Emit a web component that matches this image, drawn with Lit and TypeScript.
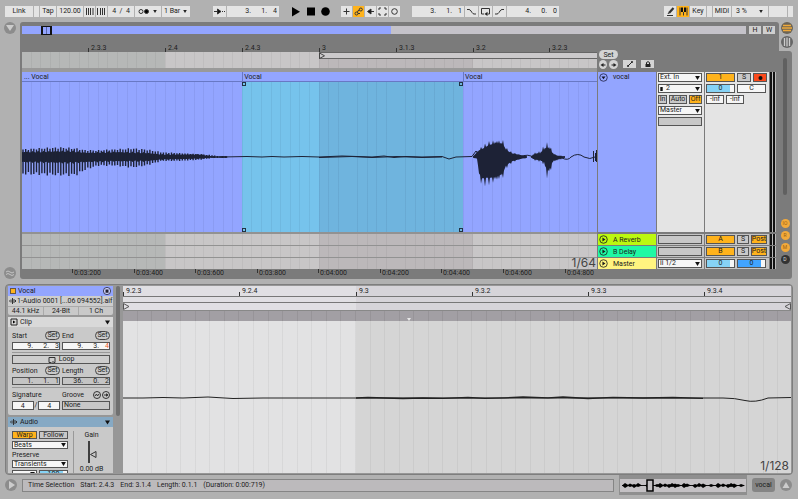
import { LitElement, html, svg, css } from "lit";
import { customElement } from "lit/decorators.js";

type Key = [x: number, up: number, down: number];

const TIMELINE_W = 575;
const MID = 75;

/** Linear interpolation between envelope keys. */
const envelope = (keys: Key[], x: number): [number, number] => {
  for (let i = 1; i < keys.length; i++) {
    const [x1, u1, d1] = keys[i];
    if (x <= x1) {
      const [x0, u0, d0] = keys[i - 1];
      const t = (x - x0) / (x1 - x0);
      return [u0 + (u1 - u0) * t, d0 + (d1 - d0) * t];
    }
  }
  return [0, 0];
};

/** Filled outline whose peaks reach the envelope and whose valleys fall back toward the middle. */
const burst = (keys: Key[], mid: number, step: number, core: number): string => {
  const top: string[] = [];
  const bottom: string[] = [];
  const end = keys[keys.length - 1][0];
  let n = 0;
  for (let x = keys[0][0]; x <= end; x += step, n++) {
    const [u, d] = envelope(keys, x);
    const wob = 0.85 + 0.15 * Math.sin(n * 1.7);
    const k = n % 2 ? core : wob;
    top.push(`${x.toFixed(1)} ${(mid - Math.max(u * k, 0.5)).toFixed(1)}`);
    bottom.unshift(`${x.toFixed(1)} ${(mid + Math.max(d * k, 0.5)).toFixed(1)}`);
  }
  return `M${top.join("L")}L${bottom.join("L")}Z`;
};

/** One vertical stroke for each period of the tone. */
const spikes = (keys: Key[], mid: number, period: number): string => {
  let d = "";
  let n = 0;
  for (let x = keys[0][0] + 1; x <= keys[keys.length - 1][0]; x += period, n++) {
    const [u, l] = envelope(keys, x);
    const k = 0.92 + 0.08 * Math.sin(n * 2.3);
    d += `M${x.toFixed(1)} ${(mid - u * k).toFixed(1)}V${(mid + l * k).toFixed(1)}`;
  }
  return d;
};

const DECAY: Key[] = [
  [0, 8, 18], [15, 9, 18], [38, 10, 19], [54, 9, 19], [64, 7, 13], [76, 7, 9],
  [92, 8, 9], [110, 9, 11], [124, 8, 9], [140, 5, 4], [160, 4, 4], [178, 3, 3],
  [190, 2, 1], [196, 1, 1], [206, 1, 1],
];
const DECAY_CORE: Key[] = [
  [0, 6, 6], [50, 7, 7], [64, 5, 6], [92, 6, 5], [124, 5, 5], [140, 3, 3], [178, 3, 2], [190, 1, 1], [206, 1, 1],
];
const WORD_A: Key[] = [
  [451, 1, 1], [455, 6, 2], [457, 9, 22], [460, 11, 30], [466, 16, 29], [474, 19, 27],
  [481, 18, 22], [484, 10, 12], [490, 5, 6], [497, 3, 3], [505, 1, 1],
];
const WORD_B: Key[] = [
  [509, 1, 1], [513, 5, 4], [518, 6, 5], [522, 12, 8], [525, 15, 22], [528, 13, 18],
  [531, 5, 6], [535, 2, 4], [543, 1, 1],
];

const BEATS: [string, number][] = [
  ["2.3.3", 66], ["2.4", 143], ["2.4.3", 220], ["3", 297], ["3.1.3", 374], ["3.2", 451], ["3.2.3", 527],
];
const TIMES: [string, number][] = [
  ["0:03:200", 50], ["0:03:400", 112], ["0:03:600", 173], ["0:03:800", 235],
  ["0:04:000", 296], ["0:04:200", 358], ["0:04:400", 419], ["0:04:600", 481], ["0:04:800", 543],
];
const EDITOR_W = 668;
const EDITOR_BEATS: [string, number][] = [
  ["9.2.3", 0], ["9.2.4", 116], ["9.3", 233], ["9.3.2", 349], ["9.3.3", 465], ["9.3.4", 581],
];

const pct = (v: number, total: number) => `left:${((v / total) * 100).toFixed(2)}%`;

const marks = (items: [string, number][], total: number) =>
  items.map(([t, x]) => html`<span class="mark" style=${pct(x, total)}>${t}</span>`);

const arrow = html`<svg class="arrow" viewBox="0 0 6 5"><path d="M0 0H6L3 5Z" /></svg>`;

const choice = (label: string, value: string, cls = "", lead: unknown = "") => html`
  <label class="box choice ${cls}">${lead}<select aria-label=${label}><option>${value}</option></select>${arrow}</label>`;

const position = (label: string, parts: string[], cls = "") => html`
  <div class="position ${cls}" role="group" aria-label=${label}>
    ${parts.map((p, i) => html`<input aria-label="${label} ${i + 1}" .value=${i < 2 ? p + "." : p} />`)}
  </div>`;

const playDot = html`<svg class="dot" viewBox="0 0 10 10">
  <circle cx="5" cy="5" r="4.2" fill="none" stroke="currentColor" stroke-width=".9" />
  <path d="M3.8 2.8V7.2L7.2 5Z" fill="currentColor" /></svg>`;

const meter = html`<div class="meter"><i></i><i></i></div>`;

@customElement("app-root")
export class AppRoot extends LitElement {
  static styles = css`
    :host {
      display: flex; flex-direction: column; height: 100vh; min-height: 440px; box-sizing: border-box;
      background: #b1b1b1; color: #1c1c1c; overflow: hidden;
      font: 7px/8px Roboto, "Liberation Sans", sans-serif;
    }
    * { box-sizing: border-box; }
    button, input, select { font: inherit; color: inherit; margin: 0; padding: 0; border: 0; border-radius: 0; background: none; min-width: 0; appearance: none; }
    svg { display: block; flex: none; }

    /* control bar */
    .bar { display: flex; align-items: center; height: 22px; padding: 0 5px; flex: none; }
    .group { display: flex; gap: 1px; margin-right: 12px; }
    .group.wide { margin-right: 23px; }
    .group.end { margin: 0 0 0 auto; }
    .group > * { height: 11px; background: #e4e4e4; display: flex; align-items: center; justify-content: center; flex: none; }
    .group svg { width: 11px; height: 11px; fill: none; stroke: #333; stroke-width: 1; }
    .group > .on { background: #ffb31c; }
    .w5 { width: 5px; } .w11 { width: 11px; } .w12 { width: 12px; } .w13 { width: 13px; } .w16 { width: 16px; }
    .w18 { width: 18px; } .w26 { width: 26px; } .w28 { width: 28px; } .w36 { width: 36px; }
    .group .w51 { width: 52px; justify-content: flex-end; padding-right: 2px; }
    .group input.w26 { text-align: center; }
    .group label { gap: 2px; }
    .group label.w36 { gap: 12px; }
    .group .arrow { width: 4px; height: 3px; stroke: none; fill: #222; }
    .group.plain { gap: 4px; margin-right: 9px; }
    .group.plain > * { background: none; }
    .group.plain svg { fill: #000; stroke: none; }
    .position { display: flex; justify-content: flex-end; align-items: center; }
    .position input { width: 16px; text-align: right; }
    .position input:last-child { width: 10px; }

    /* arrangement */
    .upper { display: flex; flex: none; }
    .gutter { width: 20px; display: flex; flex-direction: column; justify-content: space-between; align-items: center; }
    .round { width: 12px; height: 12px; border-radius: 50%; background: #8c8c8c; display: flex; align-items: center; justify-content: center; flex: none; }
    .round svg { width: 8px; height: 8px; fill: #ccc; }
    .frame { flex: 1; min-width: 0; background: #7b7b7b; border-radius: 3px 3px 0 3px; padding: 4px 0 0 2px; }
    .overview { display: flex; gap: 2px; padding-right: 4px; height: 8px; }
    .map { flex: 1; position: relative; margin-right: 1px; background: linear-gradient(90deg, #93a5ff 51%, #c4c2c9 51%); }
    .view { position: absolute; left: 2.6%; width: 11px; top: 0; bottom: -1px; border: solid #111; border-width: 1px 2px; background: linear-gradient(90deg, transparent 3px, #5a66a8 3px 4px, transparent 4px); }
    .overview button { width: 12px; background: #cfcfcf; line-height: 8px; }
    .body { display: flex; gap: 1px; }
    .timeline { flex: 1; min-width: 0; }
    .ruler { height: 18px; position: relative; }
    .mark { position: absolute; bottom: 0; height: 7px; padding-left: 3px; line-height: 6px; white-space: nowrap; }
    .mark::before { content: ""; position: absolute; left: 0; bottom: 0; height: 4px; width: 1px; background: #333; }
    .beats {
      background:
        repeating-linear-gradient(90deg, transparent 0 1.5%, #0000000c 1.5% 1.67%),
        linear-gradient(90deg, #b6b8b7 24.9%, #c8c6c7 24.9% 51.7%, #bcb8ba 51.7% 78.4%, #c8c6c7 78.4%);
    }
    .scrub { height: 16px; display: flex; justify-content: flex-end; }
    .loop { width: 48.3%; height: 7px; border: solid #666; border-width: 1px 0; background: #cbc9cb; }
    .loop svg { width: 6px; height: 6px; fill: none; stroke: #444; }
    .strip { height: 4px; background: #999; }
    .clips { display: flex; height: 160px; flex-direction: column; position: relative; background: #93a5ff; }
    .names { display: flex; height: 10px; border-bottom: 1px solid #6878c4; }
    .names span { padding: 1px 0 0 1px; border-left: 1px solid #6878c4; }
    .names span:nth-child(1) { width: 38.3%; border: 0; padding-left: 2px; }
    .names span:nth-child(2) { width: 38.4%; }
    .selection { position: absolute; left: 38.3%; width: 38.4%; top: 10px; bottom: 0; background: linear-gradient(90deg, #76c3ec 34.8%, #6fb4de 34.8%); display: grid; grid-template-columns: 4px 4px; justify-content: space-between; align-content: space-between; }
    .selection i { height: 4px; border: 1px solid #234; }
    .wave { position: relative; flex: 1; min-height: 0; background: repeating-linear-gradient(90deg, transparent 0 1.5%, #0000220f 1.5% 1.67%); }
    .wave svg { width: 100%; height: 150px; fill: #1d2236; stroke: none; }
    .wave .thin { fill: none; stroke: #1d2236; stroke-width: 1; }
    .wave .spikes { fill: none; stroke: #1d2236; stroke-width: 1.4; }
    .lane { height: 11px; margin-top: 1px; }
    .lanes { background: #929292; padding-top: 1px; position: relative; }
    .zoom { position: absolute; right: 1px; bottom: 0; font: 12px/12px Inter, "Liberation Sans", sans-serif; color: #444; }
    .clock { height: 10px; position: relative; }
    .clock .mark { top: 0; height: 8px; padding-left: 2px; line-height: 9px; }
    .clock .mark::before { top: 0; }

    .tracks { width: 181px; flex: none; }
    .locators { height: 38px; padding: 16px 0 0 1px; display: grid; grid-template-columns: 8px 9px 16px 16px; column-gap: 2px; row-gap: 1px; align-content: start; }
    .locators button { height: 9px; background: #d4d4d4; display: flex; align-items: center; justify-content: center; }
    .locators svg { width: 8px; height: 8px; fill: #222; }
    .locators .set { grid-column: 1 / 3; border-radius: 5px; }
    .locators .nav { border-radius: 50%; grid-row: 2; }
    .locators .tool { height: 8px; grid-row: 2; margin-left: 3px; }
    .row { display: grid; grid-template-columns: 58px 47px 64px 6px; gap: 1px; height: 11px; margin-top: 1px; }
    .row.tall { height: 160px; margin: 0 0 2px; }
    .row > * { background: #c4c4c4; min-width: 0; }
    .row.tall > * { background: #e4e4e4; }
    .name { display: flex; align-items: center; gap: 5px; padding-left: 1px; }
    .row.tall .name { background: #93a5ff; align-items: flex-start; padding-top: 1px; line-height: 9px; }
    .row .reverb { background: #bcf810; }
    .row .delay { background: #1ff9a4; }
    .row .main { background: #fff480; }
    .dot { width: 9px; height: 9px; }
    .io, .mix { display: flex; flex-direction: column; gap: 2px; padding: 1px 2px 1px 1px; }
    .line { display: flex; gap: 2px; }
    .box { height: 9px; border: 1px solid #555; background: #f6f6f6; display: flex; align-items: center; justify-content: center; line-height: 7px; white-space: nowrap; }
    .choice select { flex: 1; height: 7px; line-height: 7px; padding-left: 1px; }
    .arrow { width: 5px; height: 4px; fill: #111; margin-right: 1px; }
    .box.grey { background: #c8c8c8; }
    .box.amber { background: #ffb31c; }
    .box.red { background: #fb4a1c; }
    .box.red .arrow { margin: 0; }
    .box.fill { background: linear-gradient(90deg, #86d3f6 84%, #f6f6f6 84%); }
    .box.deep { background: linear-gradient(90deg, #41a4ff 84%, #f6f6f6 84%); }
    .f1 { flex: 1; }
    .half { width: 29px; }
    .s12 { width: 12px; } .s14 { width: 14px; } .s16 { width: 16px; } .s18 { width: 18px; }
    .line.spread button { flex: 1 1 auto; }
    .row .meter { display: flex; gap: 1px; background: #bbb; }
    .meter i { width: 2px; background: #111; }

    .side { width: 19px; display: flex; flex-direction: column; }
    .switches { height: 29px; display: flex; flex-direction: column; gap: 2px; padding-left: 2px; }
    .switches svg { width: 12px; height: 12px; }
    .well { flex: 1; width: 13px; background: #7b7b7b; border-radius: 0 3px 3px 0; display: flex; flex-direction: column; align-items: center; gap: 3px; padding: 7px 1px 15px 0; }
    .thumb { width: 4px; flex: 1; background: #606060; border-radius: 2px; margin-bottom: 21px; }
    .pill { width: 9px; height: 9px; border-radius: 50%; background: #f2a93a; color: #9a6210; font-size: 5px; line-height: 9px; text-align: center; }
    .pill.dark { background: #333; color: #ddd; }

    /* clip detail */
    .detail { flex: 1; min-height: 0; margin: 5px 5px 0; padding: 1px; border: 1px solid #7e7e7e; border-radius: 4px; background: #979797; display: flex; gap: 3px; overflow: hidden; }
    .inspector { width: 106px; flex: none; display: flex; flex-direction: column; gap: 2px; padding-left: 1px; overflow: hidden; }
    .card { flex: none; background: #c9c9c9; border-radius: 2px; }
    .head { display: flex; align-items: center; gap: 2px; height: 10px; padding: 0 2px; background: #d9d9d9; white-space: nowrap; }
    .head.clip { background: #93a5ff; }
    .head.file { background: #cdcdcd; gap: 0; padding: 0 0 0 1px; }
    .head.audio { background: #86a9c4; }
    .head svg { width: 8px; height: 8px; }
    .head .arrow { width: 5px; height: 5px; }
    .chip { width: 6px; height: 6px; background: #ffb31c; border: 1px solid #654; }
    .facts { display: grid; grid-template-columns: 1fr 1fr 1fr; border-top: 1px solid #aaa; text-align: center; line-height: 8px; }
    .facts span + span { border-left: 1px solid #aaa; }
    .fields { padding: 4px 4px 5px; display: grid; grid-template-columns: 48px 48px; column-gap: 2px; row-gap: 2px; }
    .cap { display: flex; align-items: center; justify-content: space-between; height: 9px; }
    .pillset { border: 1px solid #444; border-radius: 5px; height: 9px; line-height: 7px; width: 15px; }
    .fields .position { border: 1px solid #555; background: #f6f6f6; height: 8px; line-height: 6px; }
    .fields .position.flat { background: #c4c4c4; }
    .fields .position input { height: 6px; line-height: 6px; }
    .position.hot input:last-child { color: #f05a28; }
    .full { grid-column: 1 / 3; }
    hr { grid-column: 1 / 3; margin: 0; border: 0; border-top: 1px solid #999; }
    .box.loopbtn { background: #cdcdcd; gap: 3px; }
    .icon { width: 8px; height: 8px; fill: none; stroke: #333; }
    .sig input { width: 100%; text-align: center; height: 7px; }
    .sig .box { flex: 1; min-width: 0; }
    .pair { display: flex; gap: 1px; }
    .warp { display: grid; grid-template-columns: 56px 1fr; padding: 4px 4px 0; }
    .warp > div { display: flex; flex-direction: column; gap: 2px; }
    .warp .box { height: 8px; line-height: 6px; }
    .warp select { height: 6px; line-height: 6px; }
    .warp .gain { border-left: 1px solid #999; margin-left: 5px; align-items: center; text-align: center; gap: 1px; }
    .gain svg { width: 16px; height: 24px; }
    .warp .cap { height: 7px; }
    .scroll { width: 4px; height: 130px; border-radius: 2px; background: #707070; flex: none; }
    .editor { flex: 1; min-width: 0; display: flex; flex-direction: column; position: relative; }
    .tone { background: linear-gradient(90deg, #e0dfe3 34.9%, #d6d4d9 34.9%); }
    .editor .ruler { height: 11px; border-bottom: 1px solid #777; }
    .editor .mark { height: 8px; line-height: 7px; }
    .editor .zoom { bottom: 1px; right: 2px; }
    .thinrow { height: 6px; border-bottom: 1px solid #777; }
    .looprow { height: 8px; border-bottom: 1px solid #888; display: flex; justify-content: space-between; }
    .looprow svg { width: 7px; height: 7px; fill: none; stroke: #555; }
    .shade { height: 10px; background: repeating-linear-gradient(90deg, transparent 0 2.03%, #00000012 2.03% 2.18%), #a29fa4; display: flex; justify-content: center; align-items: flex-end; padding-right: 96px; }
    .shade svg { width: 4px; height: 3px; fill: #e8e8e8; }
    .canvas { flex: 1; min-height: 0; background: repeating-linear-gradient(90deg, transparent 0 2.03%, #0000000c 2.03% 2.18%), linear-gradient(90deg, #e2e2e3 34.9%, #d5d5d5 34.9%); }
    .canvas svg { width: 100%; height: 150px; fill: none; stroke: #222; stroke-width: 1; }

    /* status line */
    .status { display: flex; flex: none; height: 24px; padding: 0 6px 4px 5px; align-items: center; }
    .text { flex: 1; height: 13px; margin: 0 5px 0 5px; border: 1px solid #858585; background: #bcbabc; padding: 0 5px; line-height: 11px; display: flex; gap: 6px; overflow: hidden; white-space: nowrap; }
    .notch { background: #8f8f8f; align-self: flex-start; padding: 4px 1px 3px; height: 20px; }
    .mini { width: 126px; height: 13px; background: #c4c1c4; }
    .tab { width: 23px; height: 14px; margin: 0 5px; border-radius: 3px; background: #858585; }
  `;

  render() {
    return html`
      ${this.controlBar()}
      <main class="upper">
        <div class="gutter">
          <span class="round"><svg viewBox="0 0 8 8"><path d="M0 1H8L4 7Z" /></svg></span>
          <span class="round"><svg viewBox="0 0 8 8"><path d="M0 3Q2 1 4 3T8 3M0 5.5Q2 3.5 4 5.5T8 5.5" fill="none" stroke="#c4c4c4" /></svg></span>
        </div>
        <div class="frame">
          <div class="overview"><div class="map"><div class="view"></div></div><button>H</button><button>W</button></div>
          <div class="body">${this.timeline()}${this.tracks()}</div>
        </div>
        <aside class="side">
          <div class="switches">
            <svg viewBox="0 0 12 12"><circle cx="6" cy="6" r="6" fill="#6b6456" /><path d="M2 3.5H10M1 6H11M2 8.5H10" stroke="#f0a93a" stroke-width="1.5" /></svg>
            <svg viewBox="0 0 12 12"><circle cx="6" cy="6" r="6" fill="#666" /><path d="M3.5 2V10M6 1.5V10.5M8.5 2V10" stroke="#ccc" stroke-width="1.3" /></svg>
          </div>
          <div class="well">
            <div class="thumb"></div>
            <button class="pill">IO</button><button class="pill">R</button><button class="pill">M</button><button class="pill dark">D</button>
          </div>
        </aside>
      </main>
      ${this.detail()} ${this.status()}
    `;
  }

  private controlBar() {
    return html`<header class="bar">
      <div class="group wide">
        <button class="w28">Link</button><span class="w5"></span><button class="w16">Tap</button>
        <input class="w26" aria-label="Tempo" value="120.00" />
        <button class="w11" aria-label="Nudge down"><svg viewBox="0 0 11 11"><path d="M2.5 2V9M4.5 2V9M6.5 2V9M9 2V9" /></svg></button>
        <button class="w11" aria-label="Nudge up"><svg viewBox="0 0 11 11"><path d="M1.5 2V9M4.5 2V9M6.5 2V9M8.5 2V9" /></svg></button>
        <input class="w26" aria-label="Time signature" value="4  /  4" />
        <button class="w26" aria-label="Metronome"><svg viewBox="0 0 11 11"><circle cx="3" cy="5.5" r="2" /><circle cx="8.5" cy="5.5" r="2" fill="#000" /></svg>&nbsp;&nbsp;<svg class="arrow" viewBox="0 0 6 5"><path d="M0 0H6L3 5Z" /></svg></button>
        <label class="w28"><select aria-label="Quantization"><option>1 Bar</option></select>${arrow}</label>
      </div>
      <div class="group">
        <button class="w13" aria-label="Follow"><svg viewBox="0 0 11 11"><path d="M0 5.5H4M8 5.5H9M10 5.5H11" /><path d="M3.5 3V8L7 5.5Z" fill="#111" /></svg></button>
        ${position("Arrangement position", ["3", "1", "4"], "w51")}
      </div>
      <div class="group plain">
        <button aria-label="Play"><svg viewBox="0 0 11 11"><path d="M1 1V10.5L9 5.7Z" /></svg></button>
        <button aria-label="Stop"><svg viewBox="0 0 11 11"><path d="M1 1.500H9V9.500H1Z" /></svg></button>
        <button aria-label="Record"><svg viewBox="0 0 11 11"><circle cx="4.5" cy="5.5" r="4.3" /></svg></button>
      </div>
      <div class="group">
        <button class="w11" aria-label="Overdub"><svg viewBox="0 0 11 11"><path d="M5.5 2.5V8.5M2.5 5.5H8.5" /></svg></button>
        <button class="w11 on" aria-label="Automation arm"><svg viewBox="0 0 11 11"><circle cx="3.5" cy="7.5" r="1.5" /><circle cx="7.8" cy="3.5" r="1.5" /><path d="M4.5 6.5Q4.5 4 6.5 4M5 7.5H7" /></svg></button>
        <button class="w11" aria-label="Re-enable automation"><svg viewBox="0 0 11 11"><path d="M5 5.5H9" /><path d="M6 3V8L2.5 5.5Z" fill="#111" /></svg></button>
        <button class="w11" aria-label="Capture"><svg viewBox="0 0 11 11"><path d="M2 4V2H4M7 2H9V4M9 7V9H7M4 9H2V7" /></svg></button>
        <button class="w11" aria-label="Session record"><svg viewBox="0 0 11 11"><circle cx="5.5" cy="5.5" r="2.8" /></svg></button>
      </div>
      <div class="group">
        ${position("Loop start", ["3", "1", "1"], "w51")}
        <button class="w13" aria-label="Punch in"><svg viewBox="0 0 11 11"><path d="M1 3.5H3Q4 3.5 5 5L6 6.5Q7 8 8 8H10" /></svg></button>
        <button class="w13" aria-label="Loop"><svg viewBox="0 0 11 11"><path d="M4 8H1.5V2.5H9.5V8H7.5" /><path d="M7.5 5.8V10L4.5 8Z" fill="#222" stroke="none" /></svg></button>
        <button class="w13" aria-label="Punch out"><svg viewBox="0 0 11 11"><path d="M1 8H3Q4 8 5 6.5L6 5Q7 3.5 8 3.5H10" /></svg></button>
        ${position("Loop length", ["4", "0", "0"], "w51")}
      </div>
      <div class="group end">
        <button class="w12" aria-label="Draw mode"><svg viewBox="0 0 11 11"><path d="M4 7L8.5 2" stroke-width="2.2" /><path d="M2 9.5H8M3 8L4 6.5" /></svg></button>
        <button class="w12 on" aria-label="Computer MIDI keyboard"><svg viewBox="0 0 11 11"><path d="M2 1.5V9.5M5.5 6V9.5M9 1.5V9.5" /><path d="M4 1.5V6M7 1.5V6" stroke-width="2" stroke="#111" /></svg></button>
        <button class="w16">Key</button><span class="w5"></span><button class="w18">MIDI</button>
        <label class="w36"><select aria-label="CPU"><option>3 %</option></select>${arrow}</label>
        <span class="w18"></span><span class="w5"></span>
      </div>
    </header>`;
  }

  private timeline() {
    return html`<section class="timeline">
      <div class="ruler">${marks(BEATS, TIMELINE_W)}</div>
      <div class="scrub beats"><div class="loop"><svg viewBox="0 0 6 6"><path d="M.5 0V5.5L5.5 2.8Z" /></svg></div></div>
      <div class="strip"></div>
      <div class="clips">
        <div class="names"><span>... Vocal</span><span>Vocal</span><span>Vocal</span></div>
        <div class="selection"><i></i><i></i><i></i><i></i></div>
        <div class="wave">
          <svg viewBox="0 0 ${TIMELINE_W} 150" preserveAspectRatio="none">
            ${svg`
              <path d=${burst(DECAY_CORE, MID, 1.35, 0.8)} />
              <path class="spikes" d=${spikes(DECAY, MID, 2.7)} />
              <path d=${burst(WORD_A, MID, 1, 0.72)} />
              <path d=${burst(WORD_B, MID, 1, 0.6)} />
              <path class="thin" d="M200 75L225 74.5L240 75L250 74.5L262 75L280 74.5L297 75L320 74L350 75L362 74L372 75.5L384 74.5L400 75L420 74.5L427 77L434 75L450 74.5L454 69L458 74M497 75Q507 71 512 76M540 76Q546 79 549 75Q556 70 562 75Q568 78 573 75" />
              <path class="thin" d="M297 75.5L330 74.5L350 75.5L375 74.5L400 75.5L420 75M571.5 69V80M573.5 71V79M574.5 68V80" />`}
          </svg>
        </div>
      </div>
      <div class="lanes">
        <div class="lane beats"></div><div class="lane beats"></div><div class="lane beats"></div>
        <div class="zoom">1/64</div>
      </div>
      <div class="clock">${marks(TIMES, TIMELINE_W)}</div>
    </section>`;
  }

  private tracks() {
    const bus = (name: string, cls: string, key: string) => html`
      <div class="row">
        <div class="name ${cls}">${playDot}${name}</div>
        <div class="io"><span class="box grey"></span></div>
        <div class="mix"><div class="line"><button class="box amber half">${key}</button><button class="box grey s12">S</button><button class="box amber s16">Post</button></div></div>
        ${meter}
      </div>`;
    return html`<section class="tracks">
      <div class="locators">
        <button class="set">Set</button>
        <button class="nav" aria-label="Previous locator"><svg viewBox="0 0 8 8"><path d="M1.5 4L4.5 2V6ZM4 3.5H6.5V4.5H4Z" /></svg></button>
        <button class="nav" aria-label="Next locator"><svg viewBox="0 0 8 8"><path d="M6.5 4L3.5 2V6ZM4 3.5H1.5V4.5H4Z" /></svg></button>
        <button class="tool" aria-label="Automation mode"><svg viewBox="0 0 8 8"><path d="M2 6L6 2" stroke="#222" /><circle cx="2" cy="6" r="1" /><circle cx="6" cy="2" r="1" /></svg></button>
        <button class="tool" aria-label="Lock envelopes"><svg viewBox="0 0 8 8"><path d="M1.5 4H6.5V7H1.5Z" /><path d="M2.5 4V2.5Q4 .8 5.5 2.5V4" fill="none" stroke="#222" /></svg></button>
      </div>
      <div class="row tall">
        <div class="name"><svg class="dot" viewBox="0 0 10 10"><circle cx="5" cy="5" r="4.2" fill="none" stroke="#224" stroke-width=".9" /><path d="M2.8 3.8H7.2L5 7Z" fill="#112" /></svg>vocal</div>
        <div class="io">
          ${choice("Audio from", "Ext. In")}
          ${choice("Input channel", "2", "", html`<svg class="arrow" viewBox="0 0 5 5"><path d="M1 0H4V5H1Z" /></svg>`)}
          <div class="line spread"><button class="box grey">In</button><button class="box grey">Auto</button><button class="box amber">Off</button></div>
          ${choice("Audio to", "Master")}
          <span class="box grey"></span>
        </div>
        <div class="mix">
          <div class="line"><button class="box amber half">1</button><button class="box grey s14">S</button><button class="box red s14" aria-label="Arm"><svg class="arrow" viewBox="0 0 5 5"><circle cx="2.5" cy="2.5" r="2.5" /></svg></button></div>
          <div class="line"><button class="box fill half">0</button><button class="box half">C</button></div>
          <div class="line"><button class="box s18">-inf</button><button class="box s18">-inf</button></div>
        </div>
        ${meter}
      </div>
      ${bus("A Reverb", "reverb", "A")} ${bus("B Delay", "delay", "B")}
      <div class="row">
        <div class="name main">${playDot}Master</div>
        <div class="io">${choice("Main output", "ii 1/2")}</div>
        <div class="mix"><div class="line"><button class="box fill half">0</button><button class="box fill deep half">0</button></div></div>
        ${meter}
      </div>
    </section>`;
  }

  private detail() {
    const cap = (t: string) => html`<div class="cap">${t}<button class="pillset">Set</button></div>`;
    const waveIcon = html`<svg viewBox="0 0 8 8"><path d="M.5 3.5V4.5M2 2.5V5.5M3.5 1V7M5 2V6M6.5 3V5" stroke="#333" /></svg>`;
    return html`<section class="detail">
      <div class="inspector">
        <div class="card">
          <div class="head clip"><span class="chip"></span><span class="f1">Vocal</span><svg viewBox="0 0 8 8"><circle cx="4" cy="4" r="3.6" fill="#d0d4ff" stroke="#223" stroke-width=".8" /><path d="M2.5 2.5H5.5V5.8H2.5Z" fill="#223" /></svg></div>
          <div class="head file">${waveIcon}<span class="f1">1-Audio 0001 [...06 094552].aif</span></div>
          <div class="facts"><span>44.1 kHz</span><span>24-Bit</span><span>1 Ch</span></div>
        </div>
        <div class="card">
          <div class="head"><svg viewBox="0 0 8 8"><path d="M1 1H7V7H1Z" fill="none" stroke="#222" /><path d="M3 2.5V5.5L5.5 4Z" /></svg><span class="f1">Clip</span>${arrow}</div>
          <div class="fields">
            ${cap("Start")}${cap("End")}
            ${position("Start", ["9", "2", "3"])}${position("End", ["9", "3", "4"], "hot")}
            <hr />
            <button class="box full loopbtn"><svg class="icon" viewBox="0 0 8 8"><path d="M3 6.5H1V1.5H7V6.5H5.5M5.5 5L4 6.5L5.5 8" /></svg>Loop</button>
            ${cap("Position")}${cap("Length")}
            ${position("Position", ["1", "1", "1"], "flat")}${position("Length", ["36", "0", "2"], "flat")}
            <hr />
            <div class="cap">Signature</div>
            <div class="cap">Groove<span class="pair"><svg class="icon" viewBox="0 0 8 8"><circle cx="4" cy="4" r="3.5" /><path d="M2 5L3.5 3L4.5 5L6 3" /></svg><svg class="icon" viewBox="0 0 8 8"><circle cx="4" cy="4" r="3.5" /><path d="M2 4H5M4.5 2.8L6 4L4.5 5.2Z" /></svg></span></div>
            <div class="pair sig"><span class="box"><input aria-label="Numerator" value="4" /></span>/<span class="box"><input aria-label="Denominator" value="4" /></span></div>
            <label class="box grey choice"><select aria-label="Groove"><option>None</option></select></label>
          </div>
        </div>
        <div class="card">
          <div class="head audio">${waveIcon}<span class="f1">Audio</span>${arrow}</div>
          <div class="warp">
            <div>
              <div class="line"><button class="box amber f1">Warp</button><button class="box grey half">Follow</button></div>
              ${choice("Warp mode", "Beats")}
              <div class="cap">Preserve</div>
              ${choice("Preserve", "Transients")}
              <div class="line">${choice("Loop mode", "→", "f1")}<button class="box fill half">100</button></div>
            </div>
            <div class="gain">Gain
              <svg viewBox="0 0 16 24"><path d="M5 1V23" stroke="#111" stroke-width="1.5" /><path d="M6.5 14.5L12 11.5V17.5Z" fill="none" stroke="#333" /></svg>
              <span>0.00 dB</span></div>
          </div>
        </div>
      </div>
      <div class="scroll"></div>
      <div class="editor">
        <div class="ruler tone">${marks(EDITOR_BEATS, EDITOR_W)}</div>
        <div class="thinrow tone"></div>
        <div class="looprow tone"><svg viewBox="0 0 7 7"><path d="M.5 .5V6.5L6 3.5Z" /></svg><svg viewBox="0 0 7 7"><path d="M6.5 .5V6.5L1 3.5Z" /></svg></div>
        <div class="shade"><svg viewBox="0 0 4 3"><path d="M0 0H4L2 3Z" /></svg></div>
        <div class="canvas"><svg viewBox="0 0 668 150" preserveAspectRatio="none">
          <path d="M0 77H20L40 76.5L60 77L85 76L110 77.5L140 77H233H560L600 77Q612 77 622 79.5T645 77L668 76.5" />
          <path stroke-width="1.3" d="M233 77L245 76.5L262 77L280 77.5L300 77L320 77.3L345 76.5L362 77.3L382 76.8L400 76L425 76.8L440 76L465 77.5L490 76.3L520 77L550 76.5L580 77.3" />
        </svg></div>
        <div class="zoom">1/128</div>
      </div>
    </section>`;
  }

  private status() {
    const blobs = [10, 20, 28, 36, 56, 74, 80, 90, 98, 104, 110, 116, 128, 134, 150, 158, 166, 182, 196, 206, 216, 222, 228, 242].map(
      (x, i) => svg`<path d=${`M${x / 2 - 3} 6.5L${x / 2} ${4 + (i % 3) * 0.5}L${x / 2 + 4} 6.5L${x / 2} ${9 - (i % 2)}Z`} />`
    );
    return html`<footer class="status">
      <span class="round"><svg viewBox="0 0 8 8"><path d="M2 0V8L8 4Z" /></svg></span>
      <div class="text"><span>Time Selection</span><span>Start: 2.4.3</span><span>End: 3.1.4</span><span>Length: 0.1.1</span><span>(Duration: 0:00:719)</span></div>
      <div class="notch"><svg class="mini" viewBox="0 0 126 13"><path d="M2 6.5H124" stroke="#111" />${blobs}<path d="M27 1H33V12H27Z" fill="#c4c1c4" stroke="#000" stroke-width="1.5" /></svg></div>
      <button class="tab">vocal</button>
      <span class="round"><svg viewBox="0 0 8 8"><path d="M4 1L7.5 7H.5Z" /></svg></span>
    </footer>`;
  }
}
